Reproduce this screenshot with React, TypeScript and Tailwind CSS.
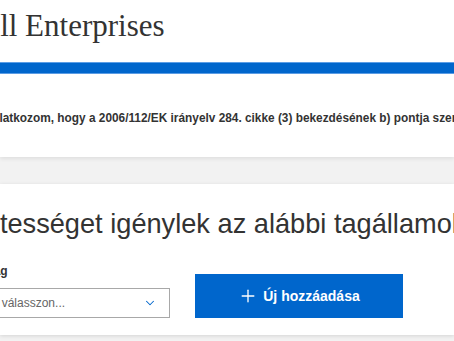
import { ChevronDown, Plus } from "lucide-react";

function Header() {
  return (
    <div className="bg-white">
      <div className="h-[62px] pt-[10px]">
        <div className="-ml-[36px] whitespace-nowrap font-['Liberation_Serif',serif] text-[31px] leading-[31px] text-[#333]">
          Dell Enterprises
        </div>
      </div>
      <div className="h-3 bg-[#0066cc] border-y border-[#5c9ee6]" />
    </div>
  );
}

function Declaration() {
  return (
    <div className="relative z-10 h-[83px] bg-white pt-[37px] shadow-[0_2px_4px_rgba(0,0,0,0.08)]">
      <p className="-ml-[19px] whitespace-nowrap text-[11.85px] font-bold leading-[14px] text-[#333]">
        Nyilatkozom, hogy a 2006/112/EK irányelv 284. cikke (3) bekezdésének b) pontja szerinti mentességet veszem igénybe.
      </p>
    </div>
  );
}

function ExemptionCard() {
  return (
    <div className="mt-[27px] h-[151px] bg-white pt-[24px] shadow-[0_1px_4px_rgba(0,0,0,0.12)]">
      <h2 className="-ml-[53px] whitespace-nowrap text-[27.2px] font-normal leading-[32px] text-[#333]">
        Mentességet igénylek az alábbi tagállamokban
      </h2>
      <div className="mt-[24px] flex items-end gap-[25px]">
        <div className="flex flex-col">
          <label className="-ml-[33px] mb-[10px] whitespace-nowrap text-[12px] font-bold leading-[14px] text-[#333]">
            Ország
          </label>
          <div className="-ml-[50px] flex h-[30px] w-[220px] items-center justify-between border border-[#a8a8a8] bg-white pl-[10px] pr-[12px]">
            <span className="whitespace-nowrap text-[12px] text-[#666]">Kérjük, válasszon...</span>
            <ChevronDown className="h-[14px] w-[14px] text-[#0066cc]" strokeWidth={1.8} />
          </div>
        </div>
        <button className="flex h-[44px] w-[208px] items-center justify-center gap-[5px] bg-[#0066cc] text-white">
          <Plus className="h-[20px] w-[20px]" strokeWidth={1.6} />
          <span className="text-[14px] font-bold">Új hozzáadása</span>
        </button>
      </div>
    </div>
  );
}

export default function App() {
  return (
    <div className="h-[341px] w-[454px] overflow-hidden bg-[#f2f2f2] font-['Liberation_Sans',Arial,sans-serif]">
      <Header />
      <Declaration />
      <ExemptionCard />
    </div>
  );
}
